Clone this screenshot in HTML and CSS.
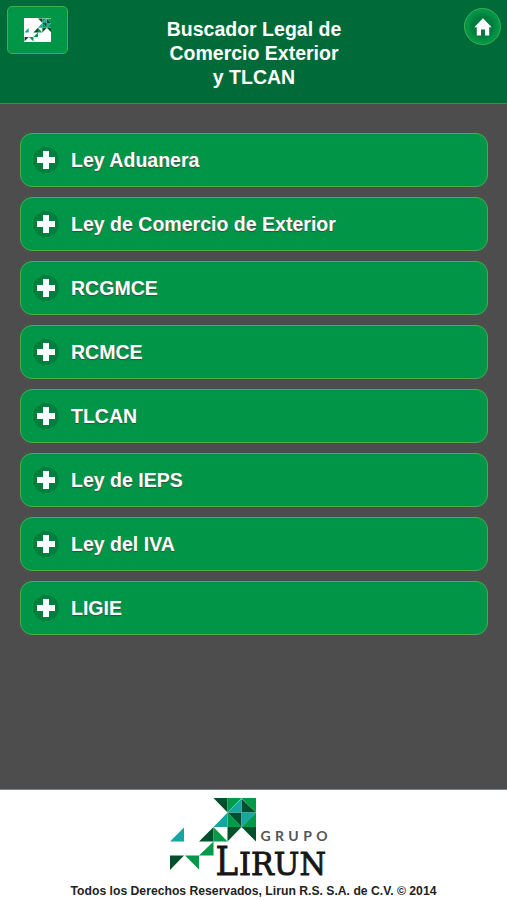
FILE: index.html
```html
<!DOCTYPE html>
<html lang="es">
<head>
    <meta charset="UTF-8">
    <meta name="viewport" content="width=device-width, initial-scale=1.0">
    <title>Buscador Legal de Comercio Exterior y TLCAN</title>
    <link rel="stylesheet" href="styles.css">
</head>
<body>
    <svg width="0" height="0" class="symbols">
        <symbol id="mark" viewBox="0 0 86 72">
            <path fill="#00502b" d="M43.5 0h14v14.5zM71.5 .5v14h14.5zM57.5 14.5h14v14.5zM57.5 29h14l-14 14.500zM71.500 29h14.500v14.500zM43.500 29v14.500h-14.500zM0 57.500h14l-14 14.500z"/>
            <path fill="#009a49" d="M57.500 0h14l-14 14.500zM71.500 0h14.500v14.500zM57.500 14.500v14.500h14zM86 14.500v14.500h-14.500zM43.500 29v14.500h14zM43.500 43.500v14h-14.500zM15 57.500h14v14z"/>
            <path fill="#16a5a0" d="M71.500 .5v14h-14zM57.500 14.500v14.500h-14zM71.500 14.500h14.500l-14.500 14.500zM14 29.500v14h-14z"/>
        </symbol>
    </svg>
    <header class="header">
        <a href="#" class="logo-btn">
            <svg class="logo-thumb" viewBox="-1 -1 86 74" preserveAspectRatio="none"><use href="#mark" width="86" height="72"/></svg>
        </a>
        <h1>Buscador Legal de<br>Comercio Exterior<br>y TLCAN</h1>
        <a href="#" class="home-btn">
            <svg width="18" height="18" viewBox="0 0 18 18"><path fill="#fff" d="M9 .3L.3 9.300H2.800V17.500h4.200v-6h4v6h4.200V9.300h2.500z"/></svg>
        </a>
    </header>
    <main class="content">
        <a href="#" class="item"><span class="plus"></span>Ley Aduanera</a>
        <a href="#" class="item"><span class="plus"></span>Ley de Comercio de Exterior</a>
        <a href="#" class="item"><span class="plus"></span>RCGMCE</a>
        <a href="#" class="item"><span class="plus"></span>RCMCE</a>
        <a href="#" class="item"><span class="plus"></span>TLCAN</a>
        <a href="#" class="item"><span class="plus"></span>Ley de IEPS</a>
        <a href="#" class="item"><span class="plus"></span>Ley del IVA</a>
        <a href="#" class="item"><span class="plus"></span>LIGIE</a>
    </main>
    <footer class="footer">
        <svg class="logo" width="160" height="86" viewBox="0 0 160 86">
            <use href="#mark" x="0" y="0" width="86" height="72"/>
            <text class="logo-grupo" x="90.500" y="43" textLength="67">GRUPO</text>
            <text class="logo-lirun" y="76.500"><tspan class="logo-cap" x="45.500" textLength="22.500" lengthAdjust="spacingAndGlyphs">L</tspan><tspan x="69" textLength="87" lengthAdjust="spacingAndGlyphs">IRUN</tspan></text>
        </svg>
        <p>Todos los Derechos Reservados, Lirun R.S. S.A. de C.V. © 2014</p>
    </footer>
</body>
</html>
```

FILE: styles.css
```css
* {
    box-sizing: border-box;
}
body {
    font-family: "Liberation Sans", Arial, sans-serif;
    font-weight: bold;
    display: flex;
    flex-direction: column;
    height: 100vh;
    margin: 0;
    background-color: #4d4d4d;
    color: #fff;
    overflow: hidden;
}
.symbols {
    display: none;
}
.header {
    display: flex;
    justify-content: space-between;
    align-items: flex-start;
    height: 104px;
    padding: 6px 6px 0 7px;
    background-color: #006b38;
    border-bottom: 1px solid #2f9440;
}
.header h1 {
    margin: 11px 24px 0 0;
    font-size: 19.5px;
    line-height: 24px;
    text-align: center;
    flex: 1;
}
.logo-btn {
    display: flex;
    justify-content: center;
    align-items: center;
    width: 61px;
    height: 48px;
    background: #009547;
    border: 1px solid #44ae4c;
    border-radius: 5px;
}
.logo-thumb {
    width: 27px;
    height: 24px;
    background: #fff;
}
.home-btn {
    display: flex;
    justify-content: center;
    align-items: center;
    width: 37px;
    height: 37px;
    margin-top: 2px;
    background: radial-gradient(circle, #007b3c 40%, #009547 62%);
    border: 1px solid #44ae4c;
    border-radius: 50%;
}
.content {
    flex: 1;
    display: flex;
    flex-direction: column;
    gap: 10px;
    padding: 29px 19px 0 20px;
}
.item {
    display: flex;
    align-items: center;
    height: 54px;
    padding-left: 12px;
    background-color: #009547;
    border: 1px solid #44ae4c;
    border-radius: 12px;
    color: #fff;
    font-size: 19.55px;
    text-decoration: none;
    text-shadow: 0 1px 1px #444;
}
.plus {
    display: flex;
    width: 26px;
    height: 26px;
    margin-right: 12px;
    border-radius: 50%;
    background:
        linear-gradient(#fff, #fff) center / 18px 6px no-repeat,
        linear-gradient(#fff, #fff) center / 6px 18px no-repeat,
        #007e3d;
}
.footer {
    height: 111px;
    padding-top: 8px;
    background-color: #fff;
    border-top: 1px solid #44ae4c;
    color: #222;
    text-align: center;
}
.logo {
    display: block;
    margin: 0 auto 0 170px;
    overflow: visible;
}
.logo-grupo {
    font-family: Lato, sans-serif;
    font-size: 14px;
    font-weight: bold;
    fill: #555;
}
.logo-lirun {
    font-family: "DejaVu Serif", serif;
    font-size: 31px;
    font-weight: normal;
    fill: #161616;
    stroke: #161616;
    stroke-width: 0.9px;
}
.logo-cap {
    font-size: 40px;
}
.footer p {
    margin: 0;
    font-size: 12.2px;
    line-height: 14px;
}
```
